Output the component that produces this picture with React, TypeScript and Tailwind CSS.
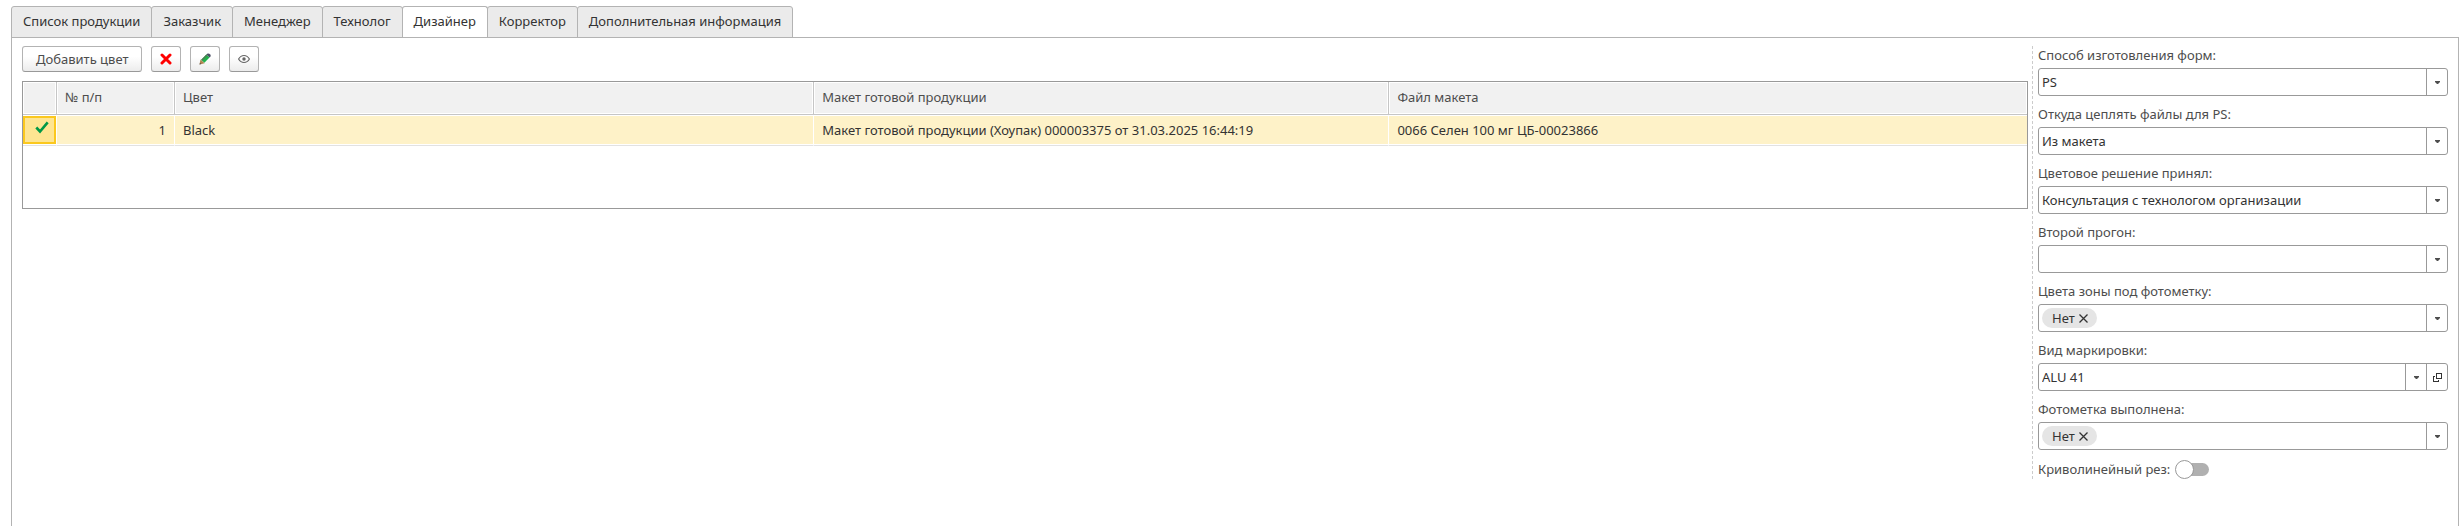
import { useId, useState, type ReactNode } from "react";

const tabs = [
  "Список продукции",
  "Заказчик",
  "Менеджер",
  "Технолог",
  "Дизайнер",
  "Корректор",
  "Дополнительная информация",
];

function TabBar({ active, onSelect }: { active: string; onSelect: (tab: string) => void }) {
  return (
    <div role="tablist" className="flex pl-px">
      {tabs.map((tab) => (
        <button
          key={tab}
          type="button"
          role="tab"
          aria-selected={tab === active}
          onClick={() => onSelect(tab)}
          className={
            "-ml-px h-8 rounded-t-[3px] border px-[11px] pb-0.5 text-[#333333] whitespace-nowrap " +
            (tab === active
              ? "border-[#b3b3b3] border-b-white bg-white"
              : "border-[#b3b3b3] bg-[#ebebeb]")
          }
        >
          {tab}
        </button>
      ))}
    </div>
  );
}

function ToolButton({ label, children }: { label?: string; children: ReactNode }) {
  return (
    <button
      type="button"
      aria-label={label}
      className={
        "flex h-[26px] items-center justify-center rounded-[3px] border border-[#b3b3b3] border-b-[#999999] bg-linear-to-b from-white from-40% to-[#ececec] text-[#4d4d4d] whitespace-nowrap " +
        (label ? "w-[30px]" : "px-[13px]")
      }
    >
      {children}
    </button>
  );
}

function CrossIcon() {
  return (
    <svg width="12" height="12" viewBox="0 0 12 12" aria-hidden="true">
      <path d="M2 2l8 8M10 2l-8 8" stroke="#ff0000" strokeWidth="3" strokeLinecap="round" />
    </svg>
  );
}

function PencilIcon() {
  return (
    <svg width="12" height="12" viewBox="0 0 12 12" aria-hidden="true">
      <path d="M0.5 11.5l1-5 4.200 3.800z" fill="#b08450" />
      <path d="M0.5 11.5l.5-1.8 1.3 1.3z" fill="#4d4d4d" />
      <path d="M2.200 6.700L7.4 1.6l3.1 3-5.100 5.200z" fill="#21b14b" />
      <path d="M2.200 6.700L7.4 1.6l.9.9-5.100 5.200z" fill="#4f7a52" />
      <path d="M7.4 1.6L8.6.5q1.7-.2 2.900 1.300.4 1-.1 1.900l-.9.9z" fill="#4a4f63" />
    </svg>
  );
}

function EyeIcon() {
  return (
    <svg width="12" height="12" viewBox="0 0 12 12" fill="none" stroke="#666666" aria-hidden="true">
      <path d="M.6 6C2 3.600 3.800 2.500 6 2.500S10 3.600 11.400 6C10 8.400 8.200 9.500 6 9.500S2 8.400.6 6z" strokeWidth="1.200" />
      <circle cx="6" cy="6" r="1.700" fill="#666666" stroke="none" />
    </svg>
  );
}

function CheckIcon() {
  return (
    <svg width="14" height="13" viewBox="0 0 14 13" fill="none" className="mx-auto" aria-label="Выбрано">
      <path d="M1.300 6.500L5 10.500 12.700 1.300" stroke="#009846" strokeWidth="2.600" />
    </svg>
  );
}

function OpenIcon() {
  return (
    <svg width="9" height="9" viewBox="0 0 9 9" fill="none" stroke="#333333" shapeRendering="crispEdges" aria-hidden="true">
      <path d="M3.500.5h5v5h-5z" />
      <path d="M2 3.500H.5v5h5V7" />
    </svg>
  );
}

function Arrow() {
  return (
    <svg width="5" height="3" viewBox="0 0 5 3" aria-hidden="true">
      <path d="M0 0h5v1L3 3H2L0 1z" fill="#4d4d4d" />
    </svg>
  );
}

const headCell =
  "h-[33px] border-r border-b border-[#c6c6c6] bg-[#f1f1f1] px-2 pb-0.5 text-left font-normal text-[#4d4d4d] shadow-[inset_0_0_0_1px_#ffffff] last:border-r-0";
const bodyCell = "h-[31px] border-r border-b border-r-white border-b-[#e2e2e2] px-2 text-[#333333] bg-[#fef2c8] shadow-[inset_0_1px_0_#ffffff,inset_0_-1px_0_#ffffff] last:border-r-0";

function ColorTable() {
  return (
    <div className="h-32 border border-[#999999]">
      <table className="w-full table-fixed border-separate border-spacing-0">
        <colgroup>
          <col className="w-[34px]" />
          <col className="w-[118px]" />
          <col className="w-[31.9%]" />
          <col className="w-[28.7%]" />
          <col />
        </colgroup>
        <thead>
          <tr>
            <th className={headCell} aria-label="Отметка" />
            <th className={headCell}>№ п/п</th>
            <th className={headCell}>Цвет</th>
            <th className={headCell}>Макет готовой продукции</th>
            <th className={headCell}>Файл макета</th>
          </tr>
        </thead>
        <tbody>
          <tr>
            <td className="h-[31px] border-r border-b border-r-white border-b-[#e2e2e2] py-px">
              <div className="h-7 border-2 border-[#fbc81e] bg-[#fee592] pt-[3px] pl-1">
                <CheckIcon />
              </div>
            </td>
            <td className={bodyCell + " text-right"}>1</td>
            <td className={bodyCell}>Black</td>
            <td className={bodyCell}>Макет готовой продукции (Хоупак) 000003375 от 31.03.2025 16:44:19</td>
            <td className={bodyCell}>0066 Селен 100 мг ЦБ-00023866</td>
          </tr>
        </tbody>
      </table>
    </div>
  );
}

function Field({ label, id, children }: { label: string; id: string; children: ReactNode }) {
  return (
    <div className="flex flex-col gap-0.5">
      <label htmlFor={id} className="h-5 leading-[18px] text-[#4d4d4d]">
        {label}
      </label>
      <div className="flex h-7 overflow-hidden rounded-[3px] border border-[#999999] bg-white">
        {children}
      </div>
    </div>
  );
}

function SelectField({ label, value, canOpen = false }: { label: string; value: string; canOpen?: boolean }) {
  const id = useId();
  return (
    <Field label={label} id={id}>
      <div className="grid grow grid-cols-[1fr_21px]">
        <select
          id={id}
          defaultValue={value}
          className="col-span-2 col-start-1 row-start-1 appearance-none bg-transparent pl-[3px] text-[#333333] outline-none"
        >
          <option>{value}</option>
        </select>
        <span className="pointer-events-none col-start-2 row-start-1 flex items-center justify-center border-l border-[#999999]">
          <Arrow />
        </span>
      </div>
      {canOpen && (
        <button
          type="button"
          aria-label="Открыть"
          className="flex w-[21px] items-center justify-center border-l border-[#999999]"
        >
          <OpenIcon />
        </button>
      )}
    </Field>
  );
}

function TagField({ label, tag }: { label: string; tag: string }) {
  const id = useId();
  return (
    <Field label={label} id={id}>
      <div className="flex grow items-center pl-[3px]">
        <span className="flex h-5 items-center gap-1 rounded-full bg-[#e5e5e5] pr-[9px] pl-[10px] text-[#333333]">
          {tag}
          <button type="button" aria-label="Удалить">
            <svg width="9" height="9" viewBox="0 0 9 9" stroke="#333333" aria-hidden="true">
              <path d="M.5.5l8 8M8.500.5l-8 8" strokeWidth="1.300" />
            </svg>
          </button>
        </span>
        <input id={id} type="text" className="w-0 grow pl-1 outline-none" />
      </div>
      <button
        type="button"
        aria-label="Выбрать"
        className="flex w-[21px] items-center justify-center border-l border-[#999999]"
      >
        <Arrow />
      </button>
    </Field>
  );
}

function Toggle({ label }: { label: string }) {
  const id = useId();
  return (
    <div className="flex h-5 items-center gap-[5px]">
      <label htmlFor={id} className="text-[#4d4d4d]">
        {label}
      </label>
      <input
        id={id}
        type="checkbox"
        role="switch"
        className="flex h-[13px] w-[34px] appearance-none items-center rounded-full bg-linear-to-r from-transparent from-30% to-[#b0b0b0] to-30% before:size-[19px] before:shrink-0 before:rounded-full before:border before:border-[#999999] before:bg-white checked:bg-[#009846] checked:before:ml-auto"
      />
    </div>
  );
}

export default function App() {
  const [active, setActive] = useState("Дизайнер");
  return (
    <main className="flex min-h-screen flex-col bg-white pt-1.5 pr-1 pl-[11px] font-['Noto_Sans',sans-serif] text-[13px] leading-5">
      <TabBar active={active} onSelect={setActive} />
      <section className="-mt-px flex grow gap-1 border border-b-0 border-[#b3b3b3] px-[10px] pt-2">
        <div className="flex min-w-0 grow flex-col gap-[9px]">
          <div className="flex gap-[9px]">
            <ToolButton>Добавить цвет</ToolButton>
            <ToolButton label="Удалить">
              <CrossIcon />
            </ToolButton>
            <ToolButton label="Изменить">
              <PencilIcon />
            </ToolButton>
            <ToolButton label="Просмотр">
              <EyeIcon />
            </ToolButton>
          </div>
          <ColorTable />
        </div>
        <aside className="flex w-[416px] shrink-0 flex-col gap-[9px] self-start border-l border-dashed border-[#cccccc] pl-[5px]">
          <SelectField label="Способ изготовления форм:" value="PS" />
          <SelectField label="Откуда цеплять файлы для PS:" value="Из макета" />
          <SelectField label="Цветовое решение принял:" value="Консультация с технологом организации" />
          <SelectField label="Второй прогон:" value="" />
          <TagField label="Цвета зоны под фотометку:" tag="Нет" />
          <SelectField label="Вид маркировки:" value="ALU 41" canOpen />
          <TagField label="Фотометка выполнена:" tag="Нет" />
          <Toggle label="Криволинейный рез:" />
        </aside>
      </section>
    </main>
  );
}
